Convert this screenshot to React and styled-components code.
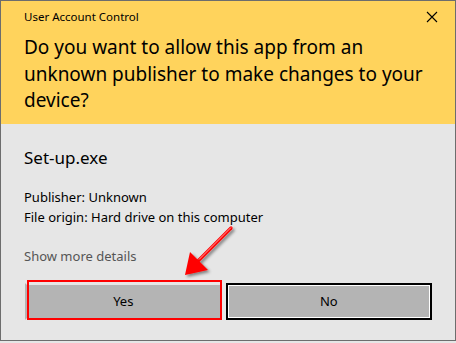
import React from 'react';
import styled, { createGlobalStyle } from 'styled-components';

const GlobalStyle = createGlobalStyle`
  html, body {
    margin: 0;
    padding: 0;
    background: #e6e6e6;
  }
  * {
    box-sizing: border-box;
  }
`;

const Dialog = styled.div`
  position: relative;
  width: 456px;
  height: 341px;
  border: 1px solid #6d6d6d;
  background: #e6e6e6;
  font-family: 'Noto Sans', 'Open Sans', sans-serif;
  color: #000;
  display: flex;
  flex-direction: column;
`;

const Header = styled.div`
  background: #ffd35c;
  height: 123px;
  padding: 7px 23px 0 23px;
  display: flex;
  flex-direction: column;
`;

const TitleRow = styled.div`
  display: flex;
  justify-content: space-between;
  align-items: flex-start;
`;

const Title = styled.div`
  font-size: 11.5px;
  line-height: 16px;
  margin-top: 1px;
`;

const CloseButton = styled.button`
  border: none;
  background: none;
  padding: 0;
  margin: 3px -6px 0 0;
  width: 12px;
  height: 12px;
  display: flex;
  cursor: pointer;
`;

const Question = styled.div`
  margin-top: 9px;
  font-size: 19px;
  line-height: 26.5px;
  width: 400px;
`;

const Body = styled.div`
  flex: 1;
  padding: 22px 23px 0 23px;
  display: flex;
  flex-direction: column;
`;

const AppName = styled.div`
  font-size: 17px;
  line-height: 24px;
`;

const Details = styled.div`
  margin-top: 18px;
  font-size: 13px;
  line-height: 19.5px;
`;

const MoreLink = styled.div`
  margin-top: 20px;
  font-size: 13px;
  line-height: 19.5px;
  color: #555;
`;

const ButtonRow = styled.div`
  margin-top: 16px;
  margin-left: 1px;
  display: flex;
  gap: 4px;
`;

const Button = styled.button`
  position: relative;
  width: ${p => p.width}px;
  height: 37px;
  background: #b4b4b4;
  border: 2px solid ${p => (p.focused ? '#000' : '#b4b4b4')};
  box-shadow: ${p => (p.focused ? 'inset 0 0 0 1px #fff' : 'none')};
  font-family: inherit;
  font-size: 13px;
  color: #000;
  padding: 0;

  ${p => p.highlight && `
    border-top-color: #e6e6e6;
    border-bottom-color: #e6e6e6;
    &::after {
      content: '';
      position: absolute;
      top: -5px;
      left: 0px;
      right: -2px;
      bottom: -2px;
      border: 2px solid #ff0000;
    }
  `}
`;

const Overlay = styled.svg`
  position: absolute;
  left: -1px;
  top: -1px;
  pointer-events: none;
`;

export default function App() {
  return (
    <>
      <GlobalStyle />
      <Dialog>
        <Header>
          <TitleRow>
            <Title>User Account Control</Title>
            <CloseButton aria-label="Close">
              <svg width="12" height="12" viewBox="0 0 12 12">
                <path d="M1 1 L11 11 M11 1 L1 11" stroke="#000" strokeWidth="1.1" />
              </svg>
            </CloseButton>
          </TitleRow>
          <Question>
            Do you want to allow this app from an unknown publisher to make changes to your device?
          </Question>
        </Header>
        <Body>
          <AppName>Set-up.exe</AppName>
          <Details>
            <div>Publisher: Unknown</div>
            <div>File origin: Hard drive on this computer</div>
          </Details>
          <MoreLink>Show more details</MoreLink>
          <ButtonRow>
            <Button width={198} highlight>Yes</Button>
            <Button width={208} focused>No</Button>
          </ButtonRow>
        </Body>
        <Overlay width="456" height="343" viewBox="0 0 456 343">
          <defs>
            <filter id="shadow" x="-20%" y="-20%" width="150%" height="150%">
              <feDropShadow dx="2" dy="2" stdDeviation="1.5" floodColor="#000" floodOpacity="0.45" />
            </filter>
          </defs>
          <g filter="url(#shadow)">
            <line x1="231" y1="228" x2="196" y2="263" stroke="#ff0000" strokeWidth="3.2" strokeLinecap="round" />
            <polygon points="185,275 190,252 208,270" fill="#ff0000" />
          </g>
          <line x1="231" y1="227.5" x2="199" y2="259.5" stroke="#ffffff" strokeWidth="0.8" opacity="0.8" />
        </Overlay>
      </Dialog>
    </>
  );
}
